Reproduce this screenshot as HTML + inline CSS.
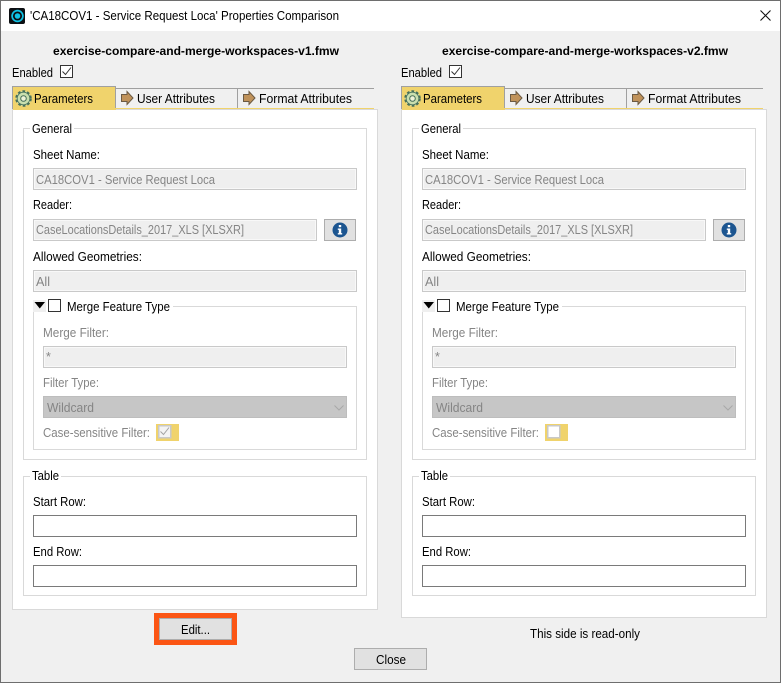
<!DOCTYPE html>
<html><head><meta charset="utf-8"><title>Properties Comparison</title>
<style>
html,body{margin:0;padding:0;background:#f0f0f0;width:781px;height:683px;overflow:hidden}
svg{display:block}
text{font-family:"Liberation Sans",sans-serif;font-size:12.5px;fill:#000}
.g{fill:#858585}
.b{font-weight:bold;font-size:12px}
.i{fill:#efefef;stroke:#c9c9c9}
.n{fill:none;stroke:#f8f8f8}
</style></head><body>
<svg width="781" height="683" viewBox="0 0 781 683" xmlns="http://www.w3.org/2000/svg" shape-rendering="crispEdges">
<rect width="781" height="683" fill="#f0f0f0"/>
<rect x="0" y="0" width="781" height="31" fill="#fff"/>
<rect x="0.5" y="0.5" width="780" height="682" fill="none" stroke="#6e6e6e"/>
<g shape-rendering="auto">
<rect x="9" y="8" width="16" height="16" rx="2" fill="#0c0f12"/>
<circle cx="17.5" cy="16" r="5.4" fill="none" stroke="#10c3e6" stroke-width="1.7"/>
<circle cx="17.5" cy="16" r="2.8" fill="#10c3e6"/>
<path d="M760.5 10.5L770.5 20.5M770.5 10.5L760.5 20.5" stroke="#111" stroke-width="1.1" fill="none"/>
</g>
<text x="30" y="20" textLength="309" lengthAdjust="spacingAndGlyphs">'CA18COV1 - Service Request Loca' Properties Comparison</text>

<!-- LEFT -->
<g>
<text class="b" x="53" y="55" textLength="286" lengthAdjust="spacingAndGlyphs">exercise-compare-and-merge-workspaces-v1.fmw</text>
<text x="12" y="77" textLength="41" lengthAdjust="spacingAndGlyphs">Enabled</text>
<rect x="60.5" y="65.5" width="12" height="12" fill="#fff" stroke="#333"/>
<path d="M62.5 71.5l3 3 5.5-7" fill="none" stroke="#333" shape-rendering="auto"/>
<rect x="12.5" y="109.5" width="365" height="500" fill="#fff" stroke="#d9d9d9"/>
<rect x="12.5" y="86.5" width="103" height="22" fill="#f0d36c" stroke="#a0a0a0"/>
<rect x="13" y="108" width="103" height="2" fill="#f0d36c"/>
<rect x="116" y="88" width="258" height="1" fill="#a0a0a0"/>
<rect x="116" y="89" width="258" height="19" fill="#f0f0f0"/>
<rect x="116" y="108" width="258" height="1" fill="#f0d36c"/>
<rect x="237" y="88" width="1" height="20" fill="#a0a0a0"/>
<g shape-rendering="auto">
<circle cx="23.5" cy="98.5" r="7.4" fill="#c9dfae" stroke="#47705a" stroke-width="1.8" stroke-dasharray="2.7 2.1"/>
<circle cx="23.5" cy="98.5" r="6.3" fill="#c9dfae" stroke="#47705a" stroke-width="0.8"/>
<circle cx="23.5" cy="98.5" r="2.8" fill="#eef3d8" stroke="#47705a"/>
<path d="M121.5 94.5h5.5v-3l6 6.5-6 6.5v-3h-5.5z" fill="#c0925a" stroke="#6b5a44"/>
<path d="M243.5 94.5h5.5v-3l6 6.5-6 6.5v-3h-5.5z" fill="#c0925a" stroke="#6b5a44"/>
</g>
<text x="34" y="103" textLength="59" lengthAdjust="spacingAndGlyphs">Parameters</text>
<text x="137" y="103" textLength="78" lengthAdjust="spacingAndGlyphs">User Attributes</text>
<text x="259" y="103" textLength="93" lengthAdjust="spacingAndGlyphs">Format Attributes</text>

<rect x="23.5" y="128.5" width="343" height="331" fill="#fff" stroke="#d9d9d9"/>
<rect x="30" y="124" width="44" height="9" fill="#fff"/>
<text x="32" y="133" textLength="40" lengthAdjust="spacingAndGlyphs">General</text>
<text x="33" y="159" textLength="67" lengthAdjust="spacingAndGlyphs">Sheet Name:</text>
<rect class="i" x="33.5" y="168.5" width="323" height="21"/><rect class="n" x="34.5" y="169.5" width="321" height="19"/>
<text class="g" x="36" y="184" textLength="179" lengthAdjust="spacingAndGlyphs">CA18COV1 - Service Request Loca</text>
<text x="33" y="209" textLength="39" lengthAdjust="spacingAndGlyphs">Reader:</text>
<rect class="i" x="33.5" y="219.5" width="283" height="21"/><rect class="n" x="34.5" y="220.5" width="281" height="19"/>
<text class="g" x="36" y="234" textLength="208" lengthAdjust="spacingAndGlyphs">CaseLocationsDetails_2017_XLS [XLSXR]</text>
<rect x="324.5" y="219.5" width="31" height="21" fill="#e1e1e1" stroke="#adadad"/>
<g shape-rendering="auto">
<circle cx="340" cy="230" r="7.5" fill="#1c5590"/>
<rect x="338.8" y="225" width="2.4" height="2.2" fill="#fff"/>
<path d="M337.8 228.5h3.4v4.6h1v1.4h-4.4v-1.4h1v-3.2h-1z" fill="#fff"/>
</g>
<text x="33" y="261" textLength="109" lengthAdjust="spacingAndGlyphs">Allowed Geometries:</text>
<rect class="i" x="33.5" y="270.5" width="323" height="21"/><rect class="n" x="34.5" y="271.5" width="321" height="19"/>
<text class="g" x="36" y="286" textLength="14" lengthAdjust="spacingAndGlyphs">All</text>

<rect x="33.5" y="306.5" width="323" height="143" fill="#fff" stroke="#d9d9d9"/>
<rect x="33" y="298" width="140" height="14" fill="#fff"/>
<rect x="33" y="300" width="13" height="12" fill="#efefef"/>
<path d="M34.5 302h10.5l-5.25 6.5z" fill="#000" shape-rendering="auto"/>
<rect x="48.5" y="299.5" width="12" height="12" fill="#fff" stroke="#333"/>
<text x="67" y="311" textLength="103" lengthAdjust="spacingAndGlyphs">Merge Feature Type</text>
<text class="g" x="43" y="337" textLength="66" lengthAdjust="spacingAndGlyphs">Merge Filter:</text>
<rect class="i" x="43.5" y="346.5" width="303" height="21"/><rect class="n" x="44.5" y="347.5" width="301" height="19"/>
<text class="g" x="46" y="361">*</text>
<text class="g" x="43" y="387" textLength="56" lengthAdjust="spacingAndGlyphs">Filter Type:</text>
<rect x="43.5" y="396.5" width="303" height="21" fill="#c6c6c6" stroke="#bdbdbd"/>
<text class="g" x="47" y="412" textLength="47" lengthAdjust="spacingAndGlyphs">Wildcard</text>
<path d="M334.5 405.5l4.5 4.5 4.5-4.5" fill="none" stroke="#a8a8a8" shape-rendering="auto"/>
<text class="g" x="43" y="437" textLength="107" lengthAdjust="spacingAndGlyphs">Case-sensitive Filter:</text>
<rect x="156" y="424" width="23" height="17" fill="#f0d36c"/>
<rect x="158.5" y="425.5" width="12" height="12" fill="#f4f4f4" stroke="#c9c9c9" stroke-width="1.5"/>
<path d="M160.5 431.5l3 3 5.5-7" fill="none" stroke="#a3a3a3" shape-rendering="auto"/>

<rect x="23.5" y="476.5" width="343" height="119" fill="#fff" stroke="#d9d9d9"/>
<rect x="30" y="472" width="31" height="9" fill="#fff"/>
<text x="32" y="480" textLength="27" lengthAdjust="spacingAndGlyphs">Table</text>
<text x="33" y="506" textLength="53" lengthAdjust="spacingAndGlyphs">Start Row:</text>
<rect x="33.5" y="515.5" width="323" height="21" fill="#fff" stroke="#7a7a7a"/>
<text x="33" y="556" textLength="49" lengthAdjust="spacingAndGlyphs">End Row:</text>
<rect x="33.5" y="565.5" width="323" height="21" fill="#fff" stroke="#7a7a7a"/>
</g>

<rect x="154" y="613" width="83" height="32" fill="#fb5514"/>
<rect x="159.5" y="618.5" width="72" height="21" fill="#e1e1e1" stroke="#adadad"/>
<text x="181" y="634" textLength="29" lengthAdjust="spacingAndGlyphs">Edit...</text>

<!-- RIGHT -->
<g transform="translate(389,0)">
<text class="b" x="53" y="55" textLength="286" lengthAdjust="spacingAndGlyphs">exercise-compare-and-merge-workspaces-v2.fmw</text>
<text x="12" y="77" textLength="41" lengthAdjust="spacingAndGlyphs">Enabled</text>
<rect x="60.5" y="65.5" width="12" height="12" fill="#fff" stroke="#333"/>
<path d="M62.5 71.5l3 3 5.5-7" fill="none" stroke="#333" shape-rendering="auto"/>
<rect x="12.5" y="109.5" width="365" height="508" fill="#fff" stroke="#d9d9d9"/>
<rect x="12.5" y="86.5" width="103" height="22" fill="#f0d36c" stroke="#a0a0a0"/>
<rect x="13" y="108" width="103" height="2" fill="#f0d36c"/>
<rect x="116" y="88" width="258" height="1" fill="#a0a0a0"/>
<rect x="116" y="89" width="258" height="19" fill="#f0f0f0"/>
<rect x="116" y="108" width="258" height="1" fill="#f0d36c"/>
<rect x="237" y="88" width="1" height="20" fill="#a0a0a0"/>
<g shape-rendering="auto">
<circle cx="23.5" cy="98.5" r="7.4" fill="#c9dfae" stroke="#47705a" stroke-width="1.8" stroke-dasharray="2.7 2.1"/>
<circle cx="23.5" cy="98.5" r="6.3" fill="#c9dfae" stroke="#47705a" stroke-width="0.8"/>
<circle cx="23.5" cy="98.5" r="2.8" fill="#eef3d8" stroke="#47705a"/>
<path d="M121.5 94.5h5.5v-3l6 6.5-6 6.5v-3h-5.5z" fill="#c0925a" stroke="#6b5a44"/>
<path d="M243.5 94.5h5.5v-3l6 6.5-6 6.5v-3h-5.5z" fill="#c0925a" stroke="#6b5a44"/>
</g>
<text x="34" y="103" textLength="59" lengthAdjust="spacingAndGlyphs">Parameters</text>
<text x="137" y="103" textLength="78" lengthAdjust="spacingAndGlyphs">User Attributes</text>
<text x="259" y="103" textLength="93" lengthAdjust="spacingAndGlyphs">Format Attributes</text>

<rect x="23.5" y="128.5" width="343" height="331" fill="#fff" stroke="#d9d9d9"/>
<rect x="30" y="124" width="44" height="9" fill="#fff"/>
<text x="32" y="133" textLength="40" lengthAdjust="spacingAndGlyphs">General</text>
<text x="33" y="159" textLength="67" lengthAdjust="spacingAndGlyphs">Sheet Name:</text>
<rect class="i" x="33.5" y="168.5" width="323" height="21"/><rect class="n" x="34.5" y="169.5" width="321" height="19"/>
<text class="g" x="36" y="184" textLength="179" lengthAdjust="spacingAndGlyphs">CA18COV1 - Service Request Loca</text>
<text x="33" y="209" textLength="39" lengthAdjust="spacingAndGlyphs">Reader:</text>
<rect class="i" x="33.5" y="219.5" width="283" height="21"/><rect class="n" x="34.5" y="220.5" width="281" height="19"/>
<text class="g" x="36" y="234" textLength="208" lengthAdjust="spacingAndGlyphs">CaseLocationsDetails_2017_XLS [XLSXR]</text>
<rect x="324.5" y="219.5" width="31" height="21" fill="#e1e1e1" stroke="#adadad"/>
<g shape-rendering="auto">
<circle cx="340" cy="230" r="7.5" fill="#1c5590"/>
<rect x="338.8" y="225" width="2.4" height="2.2" fill="#fff"/>
<path d="M337.8 228.5h3.4v4.6h1v1.4h-4.4v-1.4h1v-3.2h-1z" fill="#fff"/>
</g>
<text x="33" y="261" textLength="109" lengthAdjust="spacingAndGlyphs">Allowed Geometries:</text>
<rect class="i" x="33.5" y="270.5" width="323" height="21"/><rect class="n" x="34.5" y="271.5" width="321" height="19"/>
<text class="g" x="36" y="286" textLength="14" lengthAdjust="spacingAndGlyphs">All</text>

<rect x="33.5" y="306.5" width="323" height="143" fill="#fff" stroke="#d9d9d9"/>
<rect x="33" y="298" width="140" height="14" fill="#fff"/>
<rect x="33" y="300" width="13" height="12" fill="#efefef"/>
<path d="M34.5 302h10.5l-5.25 6.5z" fill="#000" shape-rendering="auto"/>
<rect x="48.5" y="299.5" width="12" height="12" fill="#fff" stroke="#333"/>
<text x="67" y="311" textLength="103" lengthAdjust="spacingAndGlyphs">Merge Feature Type</text>
<text class="g" x="43" y="337" textLength="66" lengthAdjust="spacingAndGlyphs">Merge Filter:</text>
<rect class="i" x="43.5" y="346.5" width="303" height="21"/><rect class="n" x="44.5" y="347.5" width="301" height="19"/>
<text class="g" x="46" y="361">*</text>
<text class="g" x="43" y="387" textLength="56" lengthAdjust="spacingAndGlyphs">Filter Type:</text>
<rect x="43.5" y="396.5" width="303" height="21" fill="#c6c6c6" stroke="#bdbdbd"/>
<text class="g" x="47" y="412" textLength="47" lengthAdjust="spacingAndGlyphs">Wildcard</text>
<path d="M334.5 405.5l4.5 4.5 4.5-4.5" fill="none" stroke="#a8a8a8" shape-rendering="auto"/>
<text class="g" x="43" y="437" textLength="107" lengthAdjust="spacingAndGlyphs">Case-sensitive Filter:</text>
<rect x="156" y="424" width="23" height="17" fill="#f0d36c"/>
<rect x="158.5" y="425.5" width="12" height="12" fill="#fff" stroke="#c9c9c9" stroke-width="1.5"/>

<rect x="23.5" y="476.5" width="343" height="119" fill="#fff" stroke="#d9d9d9"/>
<rect x="30" y="472" width="31" height="9" fill="#fff"/>
<text x="32" y="480" textLength="27" lengthAdjust="spacingAndGlyphs">Table</text>
<text x="33" y="506" textLength="53" lengthAdjust="spacingAndGlyphs">Start Row:</text>
<rect x="33.5" y="515.5" width="323" height="21" fill="#fff" stroke="#7a7a7a"/>
<text x="33" y="556" textLength="49" lengthAdjust="spacingAndGlyphs">End Row:</text>
<rect x="33.5" y="565.5" width="323" height="21" fill="#fff" stroke="#7a7a7a"/>
</g>

<text x="530" y="638" textLength="110" lengthAdjust="spacingAndGlyphs">This side is read-only</text>
<rect x="354.5" y="648.5" width="72" height="21" fill="#e1e1e1" stroke="#adadad"/>
<text x="376" y="664" textLength="30" lengthAdjust="spacingAndGlyphs">Close</text>
</svg>
</body></html>
